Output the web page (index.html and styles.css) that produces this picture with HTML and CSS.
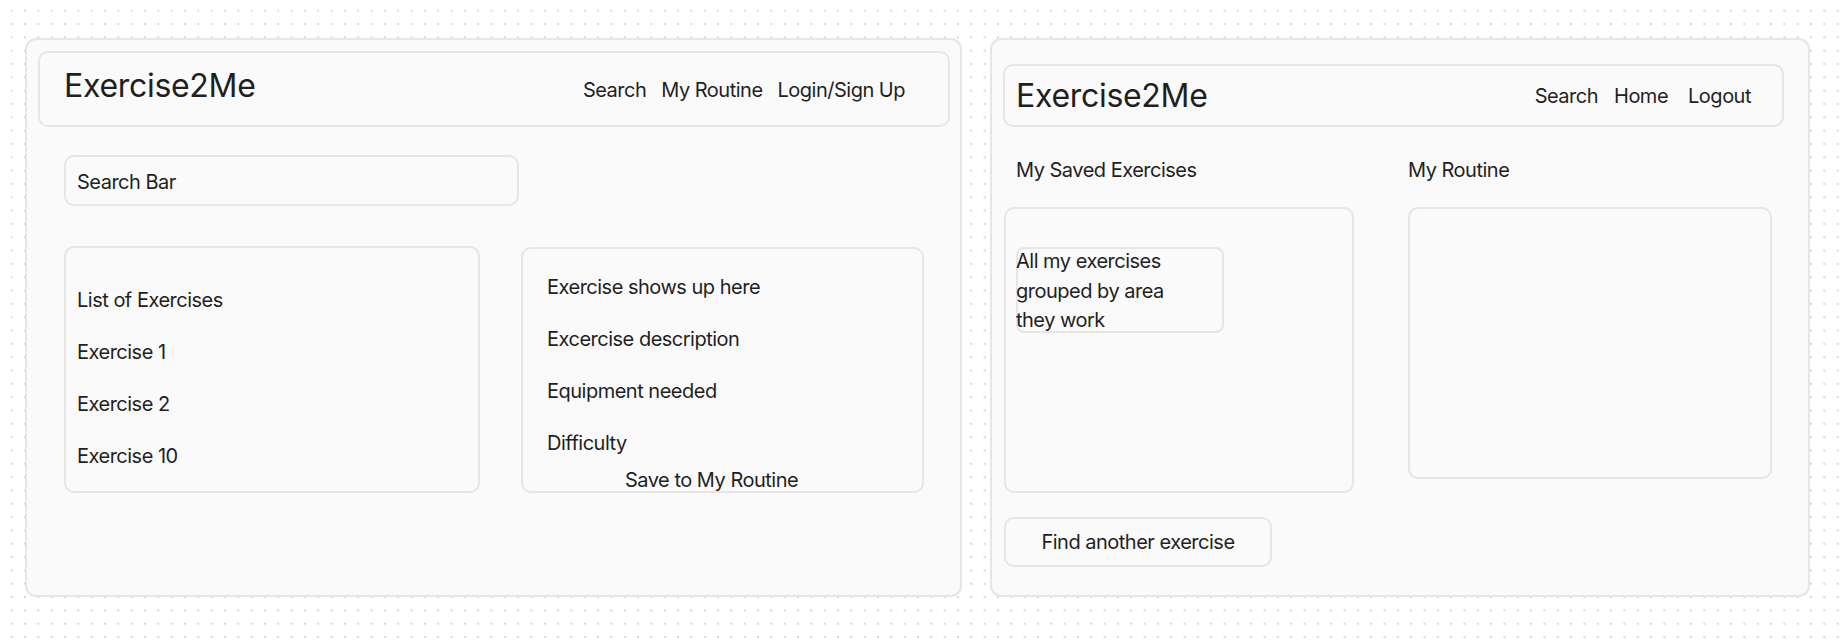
FILE: index.html
```html
<!DOCTYPE html>
<html lang="en">
<head>
<meta charset="utf-8">
<title>Exercise2Me wireframes</title>
<link rel="stylesheet" href="styles.css">
</head>
<body>
<main class="board">
  <section class="panel panel-search">
    <header class="topbar topbar-search">
      <h1 class="brand">Exercise2Me</h1>
      <nav class="nav nav-search">
        <span>Search</span>
        <span>My Routine</span>
        <span>Login/Sign Up</span>
      </nav>
    </header>
    <div class="searchbar">Search Bar</div>
    <div class="results">
      <div class="box list">
        <div class="stack">
          <span>List of Exercises</span>
          <span>Exercise 1</span>
          <span>Exercise 2</span>
          <span>Exercise 10</span>
        </div>
      </div>
      <div class="box detail">
        <div class="stack">
          <span>Exercise shows up here</span>
          <span>Excercise description</span>
          <span>Equipment needed</span>
          <span>Difficulty</span>
        </div>
        <div class="save">Save to My Routine</div>
      </div>
    </div>
  </section>

  <section class="panel panel-routine">
    <header class="topbar topbar-routine">
      <h1 class="brand">Exercise2Me</h1>
      <nav class="nav nav-routine">
        <span class="nav-search-link">Search</span>
        <span class="nav-home-link">Home</span>
        <span>Logout</span>
      </nav>
    </header>
    <div class="columns">
      <div class="col col-saved">
        <h2 class="col-title col-title-saved">My Saved Exercises</h2>
        <div class="box saved">
          <div class="group"><p class="group-text">All my exercises grouped by area they work</p></div>
        </div>
        <div class="find">Find another exercise</div>
      </div>
      <div class="col col-routine">
        <h2 class="col-title">My Routine</h2>
        <div class="box routine"></div>
      </div>
    </div>
  </section>
</main>
</body>
</html>
```

FILE: styles.css
```css
* { box-sizing: border-box; }

html, body {
  margin: 0;
  padding: 0;
}

body {
  width: 1848px;
  height: 644px;
  overflow: hidden;
  font-family: Inter, "Liberation Sans", sans-serif;
  font-size: 20px;
  line-height: 24px;
  letter-spacing: -0.5px;
  color: #1f1f1f;
  background-color: #ffffff;
  background-image: radial-gradient(circle, #d4d4d4 0.9px, transparent 1.1px);
  background-size: 13.333px 13.333px;
  background-position: 5px 4px;
}

.board {
  display: flex;
  align-items: flex-start;
  gap: 28px;
  padding: 38px 0 0 25px;
}

.panel {
  height: 559px;
  background: #fafafa;
  border: 2px solid #e6e6e6;
  border-radius: 11px;
}

.panel-search {
  width: 937px;
  padding: 11px 10px 0 11px;
}

.panel-routine {
  width: 820px;
  padding: 24px 24px 0 11px;
}

.topbar {
  display: flex;
  justify-content: space-between;
  border: 2px solid #e6e6e6;
  border-radius: 10px;
  background: #fafafa;
}

.topbar-search {
  height: 76px;
  align-items: baseline;
  padding: 13px 43px 0 24px;
}

.topbar-routine {
  height: 63px;
  align-items: center;
  padding: 10px 31px 9px 11px;
}

.brand {
  margin: 0;
  font-size: 32px;
  line-height: 40px;
  font-weight: 400;
  letter-spacing: -0.3px;
}

.nav {
  display: flex;
}

.nav-search {
  gap: 15px;
}

.nav-search-link { margin-right: 16px; }
.nav-home-link { margin-right: 20px; }

.searchbar {
  margin: 28px 0 0 26px;
  width: 455px;
  height: 51px;
  border: 2px solid #e6e6e6;
  border-radius: 10px;
  padding: 13px 11px 0;
}

.results {
  display: flex;
  align-items: flex-start;
  gap: 41px;
  margin: 40px 0 0 26px;
}

.box {
  border: 2px solid #e6e6e6;
  border-radius: 10px;
  background: #fafafa;
}

.stack {
  display: flex;
  flex-direction: column;
  gap: 28px;
}

.list {
  width: 416px;
  height: 247px;
  padding: 40px 11px 0;
}

.detail {
  width: 403px;
  height: 246px;
  margin-top: 1px;
  padding: 26px 24px 0;
}

.save {
  margin-top: 13px;
  padding-left: 78px;
}

.columns {
  display: flex;
  align-items: flex-start;
  gap: 54px;
  margin: 31px 0 0 1px;
}

.col {
  display: flex;
  flex-direction: column;
}

.col-saved { width: 350px; }
.col-routine { width: 364px; }

.col-title {
  margin: 0;
  font-size: 20px;
  line-height: 24px;
  font-weight: 400;
}

.col-title-saved { padding-left: 12px; }

.saved {
  margin-top: 25px;
  height: 286px;
  padding: 38px 0 0 10px;
}

.group {
  width: 208px;
  height: 86px;
  border: 2px solid #e6e6e6;
  border-radius: 8px;
}

.group-text {
  margin: -2px 0 0 -2px;
  line-height: 29.5px;
  width: 180px;
}

.routine {
  margin-top: 25px;
  height: 272px;
}

.find {
  margin-top: 24px;
  width: 268px;
  height: 50px;
  border: 2px solid #e6e6e6;
  border-radius: 10px;
  display: flex;
  align-items: center;
  justify-content: center;
}
```
